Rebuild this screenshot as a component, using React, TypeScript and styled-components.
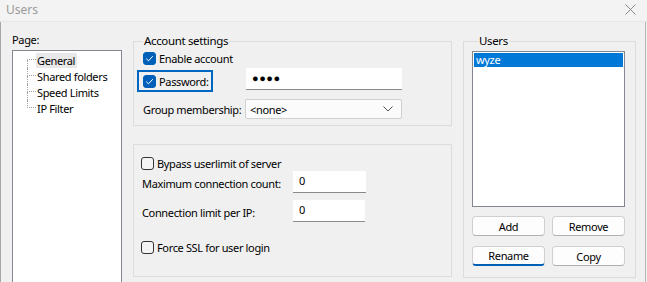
import styled, { createGlobalStyle } from "styled-components";

const GlobalStyle = createGlobalStyle`
  html, body {
    margin: 0;
    padding: 0;
    background: #f0f0f0;
  }
  body {
    font-family: "Noto Sans", "Open Sans", sans-serif;
    font-size: 11px;
    letter-spacing: -0.35px;
    color: #000000;
  }
`;

const pages = ["General", "Shared folders", "Speed Limits", "IP Filter"];

const CheckMark = () => (
  <svg width="9" height="9" viewBox="0 0 9 9">
    <path d="M1.2 4.6 L3.5 6.8 L7.8 2.2" fill="none" stroke="#ffffff" strokeWidth="1" />
  </svg>
);

const CloseIcon = () => (
  <svg width="11" height="11" viewBox="0 0 11 11">
    <path d="M0.5 0.5 L10.5 10.5 M10.5 0.5 L0.5 10.5" stroke="#8a8a8a" strokeWidth="1" />
  </svg>
);

const Chevron = () => (
  <svg width="10" height="6" viewBox="0 0 10 6">
    <path d="M0.5 0.5 L5 5 L9.5 0.5" fill="none" stroke="#555555" strokeWidth="1" />
  </svg>
);

const CheckBox = ({ checked, label }: { checked?: boolean; label: string }) => (
  <CheckLine>
    <Box $checked={checked}>{checked && <CheckMark />}</Box>
    <span>{label}</span>
  </CheckLine>
);

const App = () => {
  return (
    <>
      <GlobalStyle />
      <Window>
        <TitleBar>
          <Title>Users</Title>
          <CloseIcon />
        </TitleBar>
        <Body>
          <LeftPane>
            <PaneLabel>Page:</PaneLabel>
            <Tree>
              {pages.map((page, i) => (
                <TreeRow key={page}>
                  <Connector>
                    <ConnTop $first={i === 0} />
                    <ConnBottom $last={i === pages.length - 1} />
                  </Connector>
                  <TreeText $selected={i === 0}>{page}</TreeText>
                </TreeRow>
              ))}
            </Tree>
          </LeftPane>

          <MiddlePane>
            <Group>
              <Legend>Account settings</Legend>
              <AccountRows>
                <CheckBox checked label="Enable account" />
                <FieldRow>
                  <FocusRing>
                    <CheckBox checked label="Password:" />
                  </FocusRing>
                  <TextInput $width={156} $left={33}>●●●●</TextInput>
                </FieldRow>
                <FieldRow $center>
                  <FieldLabel $width={102}>Group membership:</FieldLabel>
                  <Select>
                    <span>&lt;none&gt;</span>
                    <Chevron />
                  </Select>
                </FieldRow>
              </AccountRows>
            </Group>

            <PlainGroup>
              <CheckBox label="Bypass userlimit of server" />
              <LimitRow>
                <FieldLabel $width={151}>Maximum connection count:</FieldLabel>
                <TextInput $width={73} $left={0}>0</TextInput>
              </LimitRow>
              <LimitRow>
                <FieldLabel $width={151}>Connection limit per IP:</FieldLabel>
                <TextInput $width={72} $left={0}>0</TextInput>
              </LimitRow>
              <SslLine>
                <CheckBox label="Force SSL for user login" />
              </SslLine>
            </PlainGroup>
          </MiddlePane>

          <UsersGroup>
            <Legend>Users</Legend>
            <UserList>
              <UserItem $selected>wyze</UserItem>
            </UserList>
            <ButtonGrid>
              <Button>Add</Button>
              <Button>Remove</Button>
              <Button $default>Rename</Button>
              <Button>Copy</Button>
            </ButtonGrid>
          </UsersGroup>
        </Body>
      </Window>
    </>
  );
};

export default App;

const Window = styled.div`
  width: 647px;
  height: 282px;
  display: flex;
  flex-direction: column;
  overflow: hidden;
  background: #f0f0f0;
`;

const TitleBar = styled.div`
  height: 22px;
  flex-shrink: 0;
  display: flex;
  align-items: center;
  justify-content: space-between;
  padding: 0 11px 2px 6px;
  background: #f3f3f3;
  border-bottom: 1px solid #e6e6e6;
  box-sizing: border-box;
`;

const Title = styled.span`
  color: #9a9a9a;
  font-size: 12px;
  letter-spacing: 0;
`;

const Body = styled.div`
  flex: 1;
  display: flex;
  align-items: flex-start;
  border-left: 1px solid #a8a8a8;
  border-right: 1px solid #b8b8b8;
  margin-right: 1px;
  padding-left: 11px;
  min-height: 0;
`;

const LeftPane = styled.div`
  width: 110px;
  display: flex;
  flex-direction: column;
  margin-top: 11px;
`;

const PaneLabel = styled.div`
  height: 17px;
  line-height: 14px;
`;

const Tree = styled.div`
  height: 240px;
  background: #ffffff;
  border: 1px solid #828790;
  padding: 1px 0 0 14px;
`;

const TreeRow = styled.div`
  display: flex;
  align-items: center;
  height: 16px;
`;

const Connector = styled.div`
  width: 9px;
  height: 16px;
  display: flex;
  flex-direction: column;
`;

const ConnTop = styled.div<{ $first?: boolean }>`
  height: 8px;
  box-sizing: border-box;
  border-left: 1px dotted ${({ $first }) => ($first ? "transparent" : "#a0a0a0")};
  border-bottom: 1px dotted #a0a0a0;
`;

const ConnBottom = styled.div<{ $last?: boolean }>`
  height: 8px;
  border-left: 1px dotted ${({ $last }) => ($last ? "transparent" : "#a0a0a0")};
`;

const TreeText = styled.span<{ $selected?: boolean }>`
  padding: 0 2px 0 1px;
  line-height: 15px;
  background: ${({ $selected }) => ($selected ? "#e8e8e8" : "transparent")};
  white-space: nowrap;
`;

const MiddlePane = styled.div`
  width: 319px;
  margin-left: 11px;
  margin-top: 11px;
  display: flex;
  flex-direction: column;
  gap: 18px;
`;

const Group = styled.fieldset`
  margin: 0;
  padding: 0 8px 6px 3px;
  border: 1px solid #dcdcdc;
  min-width: 0;
`;

const Legend = styled.legend`
  padding: 0 1px;
  margin-left: 6px;
  line-height: 16px;
  font-size: 11.5px;
  color: #000000;
`;

const AccountRows = styled.div`
  display: flex;
  flex-direction: column;
  padding-top: 1px;
`;

const CheckLine = styled.label`
  display: flex;
  align-items: center;
  gap: 3px;
  height: 16px;
  padding-left: 6px;
  white-space: nowrap;
`;

const Box = styled.span<{ $checked?: boolean }>`
  width: 13px;
  height: 13px;
  flex-shrink: 0;
  box-sizing: border-box;
  border-radius: 3px;
  display: flex;
  align-items: center;
  justify-content: center;
  background: ${({ $checked }) => ($checked ? "#005fb8" : "#f5f5f5")};
  border: 1px solid ${({ $checked }) => ($checked ? "#005fb8" : "#333333")};
`;

const FieldRow = styled.div<{ $center?: boolean }>`
  display: flex;
  align-items: ${({ $center }) => ($center ? "center" : "flex-start")};
  margin-top: ${({ $center }) => ($center ? "7px" : "2px")};
  padding-left: ${({ $center }) => ($center ? "6px" : "0")};
`;

const FocusRing = styled.div`
  margin-top: 2px;
  width: 76px;
  height: 22px;
  flex-shrink: 0;
  box-sizing: border-box;
  border: 2px solid #0067c0;
  display: flex;
  align-items: center;

  ${CheckLine} {
    padding-left: 4px;
  }
`;

const FieldLabel = styled.span<{ $width: number }>`
  width: ${({ $width }) => $width}px;
  flex-shrink: 0;
  white-space: nowrap;
`;

const TextInput = styled.div<{ $width: number; $left: number }>`
  width: ${({ $width }) => $width}px;
  height: 22px;
  flex-shrink: 0;
  margin-left: ${({ $left }) => $left}px;
  box-sizing: border-box;
  background: #ffffff;
  border-bottom: 1px solid #8a8a8a;
  padding: 0 6px;
  line-height: 20px;
  letter-spacing: 0.5px;
`;

const Select = styled.div`
  width: 157px;
  height: 20px;
  box-sizing: border-box;
  background: #fbfbfb;
  border: 1px solid #d0d0d0;
  border-radius: 2px;
  display: flex;
  align-items: center;
  justify-content: space-between;
  padding: 0 8px 0 4px;
`;

const PlainGroup = styled.div`
  height: 133px;
  box-sizing: border-box;
  border: 1px solid #dcdcdc;
  padding: 10px 0 0 1px;
  display: flex;
  flex-direction: column;
`;

const LimitRow = styled.div`
  display: flex;
  align-items: center;
  padding-left: 7px;
  height: 22px;
  ${FieldLabel} {
    padding-top: 3px;
  }
  & + & {
    margin-top: 7px;
  }
`;

const SslLine = styled.div`
  margin-top: 17px;
`;

const UsersGroup = styled.fieldset`
  width: 173px;
  box-sizing: border-box;
  margin: 11px 0 0 11px;
  padding: 2px 10px 6px 8px;
  height: 245px;
  border: 1px solid #dcdcdc;
  min-width: 0;
`;

const UserList = styled.div`
  height: 156px;
  box-sizing: border-box;
  background: #ffffff;
  border: 1px solid #828790;
  padding: 1px;
`;

const UserItem = styled.div<{ $selected?: boolean }>`
  height: 14px;
  line-height: 14px;
  padding-left: 2px;
  background: ${({ $selected }) => ($selected ? "#0078d7" : "transparent")};
  color: ${({ $selected }) => ($selected ? "#ffffff" : "#000000")};
`;

const ButtonGrid = styled.div`
  display: grid;
  grid-template-columns: 73px 73px;
  column-gap: 7px;
  row-gap: 10px;
  margin-top: 9px;
`;

const Button = styled.div<{ $default?: boolean }>`
  height: 20px;
  box-sizing: border-box;
  background: #fdfdfd;
  border: 1px solid #d0d0d0;
  border-bottom: ${({ $default }) => ($default ? "2px solid #005fb8" : "1px solid #b0b0b0")};
  border-radius: 4px;
  display: flex;
  align-items: center;
  justify-content: center;
`;
